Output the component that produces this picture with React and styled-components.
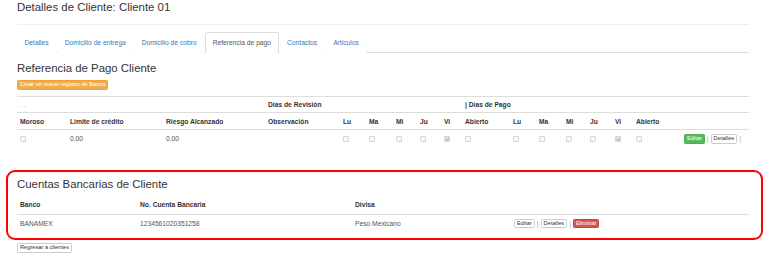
import styled, { createGlobalStyle } from 'styled-components';

const GlobalStyle = createGlobalStyle`
  html, body {
    margin: 0;
    padding: 0;
    background: #fff;
  }
  body {
    font-family: "Liberation Sans", Arial, sans-serif;
    font-size: 6.7px;
    line-height: 9.5px;
    color: #333;
  }
`;

const Page = styled.div`
  width: 774px;
  box-sizing: border-box;
  padding: 0 25px 0 17px;
`;

const Title = styled.h3`
  margin: 1.3px 0 0;
  font-size: 11.4px;
  line-height: 12.5px;
  font-weight: normal;
  color: #333;
`;

const Rule = styled.hr`
  margin: 10px 0 0;
  border: 0;
  border-top: 1px solid #eee;
`;

const Tabs = styled.ul`
  display: flex;
  margin: 7.5px 0 0;
  padding: 0;
  list-style: none;
  border-bottom: 1px solid #ddd;
`;

const Tab = styled.li`
  margin: 0 1px -1px 0;
  padding: 4.6px 6.5px;
  line-height: 9.5px;
  border: 1px solid ${(p) => (p.$active ? '#ddd' : 'transparent')};
  border-bottom-color: ${(p) => (p.$active ? '#fff' : 'transparent')};
  border-radius: 2px 2px 0 0;
  background: #fff;
  color: ${(p) => (p.$active ? '#555' : '#337ab7')};
`;

const Heading = styled.h3`
  margin: 9.3px 0 4.8px;
  font-size: 11.4px;
  line-height: 12.5px;
  font-weight: normal;
  color: #333;
`;

const Button = styled.span`
  display: inline-block;
  box-sizing: border-box;
  padding: 0 2px;
  font-size: 5.7px;
  line-height: 7.6px;
  border: 1px solid ${(p) => p.$border};
  border-radius: 1.5px;
  background: ${(p) => p.$bg};
  color: ${(p) => p.$color};
  white-space: nowrap;
  vertical-align: middle;
`;

const variants = {
  warning: { $bg: '#f0ad4e', $border: '#eea236', $color: '#fff' },
  success: { $bg: '#5cb85c', $border: '#4cae4c', $color: '#fff' },
  danger: { $bg: '#d9534f', $border: '#d43f3a', $color: '#fff' },
  default: { $bg: '#fff', $border: '#ccc', $color: '#333' },
};

const Btn = ({ kind = 'default', children }) => <Button {...variants[kind]}>{children}</Button>;

const Table = styled.table`
  width: 100%;
  table-layout: fixed;
  border-collapse: collapse;
  margin-top: ${(p) => p.$top || 0}px;

  th,
  td {
    padding: ${(p) => p.$pad || 3.2}px 3px;
    line-height: 9.5px;
    text-align: left;
    vertical-align: middle;
    white-space: nowrap;
    border-top: 1px solid #ddd;
  }
  th {
    font-weight: bold;
    color: #333;
  }
  td {
    color: #555;
  }
`;

const HeadRow = styled.tr`
  th {
    border-top: 0;
    border-bottom: 1.5px solid #ddd;
  }
`;

const Dots = styled.td`
  && {
    color: #aaa;
  }
`;

const Sep = styled.span`
  margin: 0 2px;
  color: #9ab;
  vertical-align: middle;
`;

const Box = styled.span`
  display: inline-block;
  box-sizing: border-box;
  width: 5.5px;
  height: 5.5px;
  border: 1px solid #d6d6d6;
  border-radius: 1px;
  background: ${(p) => (p.$checked ? '#dcdcdc' : '#f7f7f7')};
  vertical-align: middle;
  position: relative;

  svg {
    position: absolute;
    left: -0.5px;
    top: -0.5px;
  }
`;

const Check = ({ checked }) => (
  <Box $checked={checked}>
    {checked && (
      <svg width="5" height="5" viewBox="0 0 10 10">
        <path d="M2 5.2 L4.2 7.4 L8.2 2.6" fill="none" stroke="#999" strokeWidth="1.6" />
      </svg>
    )}
  </Box>
);

const Panel = styled.section`
  margin: 23.5px -14px 0 -11px;
  padding: 5.3px 12px 5.5px 9px;
  border: 2px solid #f00;
  border-radius: 9px;
`;

const PanelHeading = styled.h3`
  margin: 0 0 6.7px;
  font-size: 11.4px;
  line-height: 12.5px;
  font-weight: normal;
  color: #333;
`;

const Footer = styled.div`
  margin-top: 3.5px;
`;

const payCols = [50, 96, 102, 75, 26, 27, 24, 24, 21, 48, 26, 27, 24, 25, 21, 48, 68];
const days = ['Lu', 'Ma', 'Mi', 'Ju', 'Vi', 'Abierto'];
const revision = [false, false, false, false, true, false];
const pago = [false, false, false, false, true, false];

const App = () => (
  <>
    <GlobalStyle />
    <Page>
      <Title>Detalles de Cliente: Cliente 01</Title>
      <Rule />
      <Tabs>
        {['Detalles', 'Domicilio de entrega', 'Domicilio de cobro', 'Referencia de pago', 'Contactos', 'Articulos'].map(
          (t) => (
            <Tab key={t} $active={t === 'Referencia de pago'}>
              {t}
            </Tab>
          )
        )}
      </Tabs>

      <Heading>Referencia de Pago Cliente</Heading>
      <Btn kind="warning">Crear un nuevo registro de Banco</Btn>

      <Table $top={6}>
        <colgroup>
          {payCols.map((w, i) => (
            <col key={i} style={{ width: w }} />
          ))}
        </colgroup>
        <tbody>
          <tr>
            <Dots colSpan={3}>. .</Dots>
            <th colSpan={6}>Días de Revisión</th>
            <th colSpan={8}>| Días de Pago</th>
          </tr>
          <tr>
            <th>Moroso</th>
            <th>Limite de crédito</th>
            <th>Riesgo Alcanzado</th>
            <th>Observación</th>
            {days.map((d) => (
              <th key={'r' + d}>{d}</th>
            ))}
            {days.map((d) => (
              <th key={'p' + d}>{d}</th>
            ))}
            <th />
          </tr>
          <tr>
            <td>
              <Check />
            </td>
            <td>0.00</td>
            <td>0.00</td>
            <td />
            {revision.map((c, i) => (
              <td key={'rc' + i}>
                <Check checked={c} />
              </td>
            ))}
            {pago.map((c, i) => (
              <td key={'pc' + i}>
                <Check checked={c} />
              </td>
            ))}
            <td>
              <Btn kind="success">Editar</Btn>
              <Sep>|</Sep>
              <Btn>Detalles</Btn>
              <Sep>|</Sep>
            </td>
          </tr>
        </tbody>
      </Table>

      <Panel>
        <PanelHeading>Cuentas Bancarias de Cliente</PanelHeading>
        <Table $pad={3.7}>
          <colgroup>
            <col style={{ width: 120 }} />
            <col style={{ width: 215 }} />
            <col style={{ width: 159 }} />
            <col />
          </colgroup>
          <thead>
            <HeadRow>
              <th>Banco</th>
              <th>No. Cuenta Bancaria</th>
              <th>Divisa</th>
              <th />
            </HeadRow>
          </thead>
          <tbody>
            <tr>
              <td>BANAMEX</td>
              <td>1234561020351258</td>
              <td>Peso Mexicano</td>
              <td>
                <Btn>Editar</Btn>
                <Sep>|</Sep>
                <Btn>Detalles</Btn>
                <Sep>|</Sep>
                <Btn kind="danger">Eliminar</Btn>
              </td>
            </tr>
          </tbody>
        </Table>
      </Panel>

      <Footer>
        <Btn>Regresar a clientes</Btn>
      </Footer>
    </Page>
  </>
);

export default App;
